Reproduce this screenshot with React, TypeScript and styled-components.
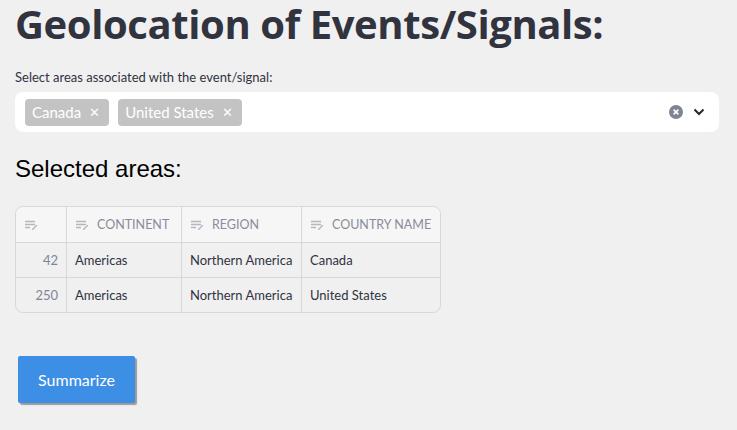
import React from 'react'
import styled, { createGlobalStyle } from 'styled-components'

const PAGE_BG = '#f0f0f0'
const TEXT = '#31333f'
const GRID_BORDER = '#d8d8d8'

const GlobalStyle = createGlobalStyle`
  html, body {
    margin: 0;
    padding: 0;
    background: ${PAGE_BG};
    font-family: 'Lato', 'Noto Sans', sans-serif;
    color: ${TEXT};
  }
`

const StyledPage = styled.div`
  width: 737px;
  height: 430px;
  overflow: hidden;
  padding: 0 18px 0 15px;
  box-sizing: border-box;
  display: flex;
  flex-direction: column;
`

const StyledTitle = styled.h1`
  margin: -4px 0 0;
  font-family: 'Open Sans', sans-serif;
  font-weight: 700;
  font-size: 40px;
  letter-spacing: -0.4px;
  line-height: 56px;
  white-space: nowrap;
  color: ${TEXT};
`

const StyledLabel = styled.label`
  margin-top: 17px;
  font-size: 13px;
  line-height: 16px;
  color: ${TEXT};
`

const StyledSelect = styled.div`
  margin-top: 7px;
  height: 40px;
  background: #ffffff;
  border-radius: 8px;
  display: flex;
  align-items: center;
  padding: 0 14px 0 10px;
`

const StyledChips = styled.div`
  flex: 1;
  display: flex;
  gap: 9px;
`

const StyledChip = styled.span`
  height: 27px;
  display: inline-flex;
  align-items: center;
  gap: 8px;
  padding: 0 9px 0 7px;
  border-radius: 4px;
  background: #c3c3c3;
  color: #ffffff;
  font-size: 15px;
`

const StyledChipClose = styled.span`
  font-size: 13px;
  line-height: 1;
`

const StyledControls = styled.div`
  display: flex;
  align-items: center;
  gap: 10px;
`

const StyledSubtitle = styled.h3`
  margin: 23px 0 0;
  font-family: 'Liberation Sans', Arial, sans-serif;
  font-weight: 400;
  font-size: 24px;
  line-height: 28px;
  color: #000000;
`

const StyledGrid = styled.div`
  margin-top: 23px;
  width: 424px;
  border: 1px solid ${GRID_BORDER};
  border-radius: 8px;
  overflow: hidden;
  display: grid;
  grid-template-columns: 51px 115px 120px 1fr;
  font-size: 13px;
`

const StyledHeadCell = styled.div<{ $last?: boolean }>`
  height: 35px;
  background: #f6f6f6;
  border-right: ${p => (p.$last ? 'none' : `1px solid ${GRID_BORDER}`)};
  border-bottom: 1px solid ${GRID_BORDER};
  display: flex;
  align-items: center;
  gap: 8px;
  padding-left: 9px;
  color: #8a8c99;
  font-size: 12.5px;
  white-space: nowrap;
`

const StyledCell = styled.div<{ $last?: boolean; $bottom?: boolean; $index?: boolean }>`
  height: 34px;
  border-right: ${p => (p.$last ? 'none' : `1px solid ${GRID_BORDER}`)};
  border-bottom: ${p => (p.$bottom ? 'none' : `1px solid ${GRID_BORDER}`)};
  display: flex;
  align-items: center;
  justify-content: ${p => (p.$index ? 'flex-end' : 'flex-start')};
  padding: 0 8px;
  color: ${p => (p.$index ? '#808495' : TEXT)};
`

const StyledButton = styled.button`
  margin: 43px 0 0 3px;
  width: 117px;
  height: 47px;
  border: none;
  border-radius: 2px;
  background: #3d8fe6;
  color: #ffffff;
  font-family: 'Lato', sans-serif;
  font-size: 16px;
  box-shadow: 2px 2px 1px #9a9a9a;
  cursor: pointer;
`

const ColumnIcon = () => (
  <svg width="13" height="10" viewBox="0 0 13 10" fill="none" stroke="#b4b6c0" strokeWidth="1.4">
    <path d="M0 1.5h10M0 4.5h10M0 7.5h5" />
    <path d="M7.5 9.5l4-4" strokeLinecap="round" />
  </svg>
)

const ClearIcon = () => (
  <svg width="14" height="14" viewBox="0 0 14 14">
    <circle cx="7" cy="7" r="7" fill="#808495" />
    <path d="M4.6 4.6l4.8 4.8M9.4 4.6l-4.8 4.8" stroke="#ffffff" strokeWidth="1.6" />
  </svg>
)

const ChevronIcon = () => (
  <svg width="12" height="8" viewBox="0 0 12 8" fill="none">
    <path d="M1.5 1.5L6 6l4.5-4.5" stroke="#262730" strokeWidth="2" />
  </svg>
)

const columns = ['CONTINENT', 'REGION', 'COUNTRY NAME']

const rows = [
  { index: 42, continent: 'Americas', region: 'Northern America', country: 'Canada' },
  { index: 250, continent: 'Americas', region: 'Northern America', country: 'United States' },
]

export default function App() {
  return (
    <StyledPage>
      <GlobalStyle />
      <StyledTitle>Geolocation of Events/Signals:</StyledTitle>
      <StyledLabel>Select areas associated with the event/signal:</StyledLabel>
      <StyledSelect>
        <StyledChips>
          {['Canada', 'United States'].map(name => (
            <StyledChip key={name}>
              {name}
              <StyledChipClose>✕</StyledChipClose>
            </StyledChip>
          ))}
        </StyledChips>
        <StyledControls>
          <ClearIcon />
          <ChevronIcon />
        </StyledControls>
      </StyledSelect>
      <StyledSubtitle>Selected areas:</StyledSubtitle>
      <StyledGrid>
        <StyledHeadCell>
          <ColumnIcon />
        </StyledHeadCell>
        {columns.map((col, i) => (
          <StyledHeadCell key={col} $last={i === columns.length - 1}>
            <ColumnIcon />
            {col}
          </StyledHeadCell>
        ))}
        {rows.map((row, r) => {
          const bottom = r === rows.length - 1
          return (
            <React.Fragment key={row.index}>
              <StyledCell $index $bottom={bottom}>{row.index}</StyledCell>
              <StyledCell $bottom={bottom}>{row.continent}</StyledCell>
              <StyledCell $bottom={bottom}>{row.region}</StyledCell>
              <StyledCell $bottom={bottom} $last>{row.country}</StyledCell>
            </React.Fragment>
          )
        })}
      </StyledGrid>
      <StyledButton>Summarize</StyledButton>
    </StyledPage>
  )
}
